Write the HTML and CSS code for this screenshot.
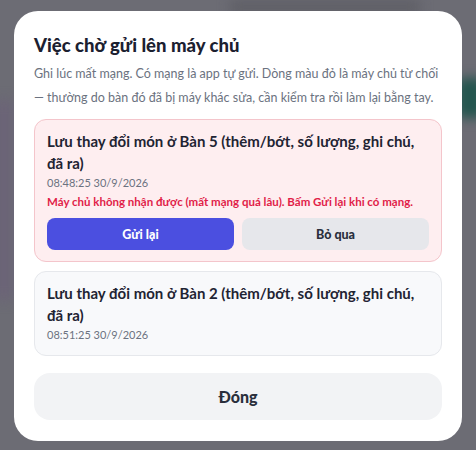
FILE: index.html
```html
<!DOCTYPE html>
<html lang="vi">
<head>
    <meta charset="UTF-8">
    <meta name="viewport" content="width=device-width, initial-scale=1.0">
    <title>Việc chờ gửi</title>
    <link rel="stylesheet" href="styles.css">
</head>
<body>
    <!-- Nền trang phía sau (bị làm mờ) -->
    <div class="backdrop">
        <div class="blob blob-top"></div>
        <div class="blob blob-teal"></div>
        <div class="blob blob-left"></div>
    </div>

    <div class="overlay">
        <div class="modal">
            <h2 class="modal-title">Việc chờ gửi lên máy chủ</h2>
            <p class="modal-desc">Ghi lúc mất mạng. Có mạng là app tự gửi. Dòng màu đỏ là máy chủ từ chối — thường do bàn đó đã bị máy khác sửa, cần kiểm tra rồi làm lại bằng tay.</p>

            <div class="job-list">
                <div class="job job-failed">
                    <div class="job-title">Lưu thay đổi món ở Bàn 5 (thêm/bớt, số lượng, ghi chú, đã ra)</div>
                    <div class="job-time">08:48:25 30/9/2026</div>
                    <div class="job-error">Máy chủ không nhận được (mất mạng quá lâu). Bấm Gửi lại khi có mạng.</div>
                    <div class="job-actions">
                        <button class="btn btn-primary">Gửi lại</button>
                        <button class="btn btn-muted">Bỏ qua</button>
                    </div>
                </div>
                <div class="job">
                    <div class="job-title">Lưu thay đổi món ở Bàn 2 (thêm/bớt, số lượng, ghi chú, đã ra)</div>
                    <div class="job-time">08:51:25 30/9/2026</div>
                </div>
            </div>

            <button class="btn-close">Đóng</button>
        </div>
    </div>
</body>
</html>
```

FILE: styles.css
```css
* {
    box-sizing: border-box;
}

body {
    margin: 0;
    height: 100vh;
    overflow: hidden;
    background: #6c6c74;
    font-family: Lato, "Noto Sans", sans-serif;
    color: #1f2433;
}

.backdrop {
    position: fixed;
    inset: 0;
    filter: blur(6px);
}

.blob {
    position: absolute;
}

.blob-top {
    top: 0;
    left: 230px;
    width: 190px;
    height: 14px;
    background: #5f5f66;
}

.blob-teal {
    top: 78px;
    right: -10px;
    width: 30px;
    height: 40px;
    background: #24564f;
    border-radius: 8px;
}

.blob-left {
    top: 100px;
    left: -6px;
    width: 20px;
    height: 200px;
    background: #6b6477;
}

.overlay {
    position: fixed;
    inset: 0;
    display: flex;
    justify-content: center;
    align-items: flex-start;
    padding-top: 11px;
}

.modal {
    width: 448px;
    background: #fff;
    border-radius: 24px;
    padding: 22px 20px 21px;
    display: flex;
    flex-direction: column;
}

.modal-title {
    margin: 0;
    font-size: 18.5px;
    font-weight: 900;
    line-height: 24px;
    color: #1b2030;
}

.modal-desc {
    margin: 5px 0 9px;
    font-size: 12.5px;
    line-height: 24px;
    color: #6b7280;
}

.job-list {
    display: flex;
    flex-direction: column;
    gap: 9px;
}

.job {
    background: #f8f9fb;
    border: 1px solid #e6e8ec;
    border-radius: 12px;
    padding: 10px 12px 11px;
}

.job-failed {
    background: #feeef0;
    border-color: #f4c5cb;
}

.job-title {
    font-size: 15px;
    font-weight: 700;
    line-height: 22px;
    color: #1f2433;
}

.job-time {
    font-size: 11px;
    line-height: 18px;
    color: #6b7280;
}

.job-error {
    margin-top: 1px;
    font-size: 11.5px;
    font-weight: 700;
    line-height: 18px;
    color: #e11d48;
}

.job-actions {
    display: grid;
    grid-template-columns: 1fr 1fr;
    gap: 8px;
    margin-top: 7px;
}

.btn {
    height: 32px;
    border: none;
    border-radius: 8px;
    font-family: inherit;
    font-size: 12.5px;
    font-weight: 900;
    cursor: pointer;
}

.btn-primary {
    background: #4b4fe0;
    color: #fff;
}

.btn-muted {
    background: #e6e7eb;
    color: #2a2f3c;
}

.btn-close {
    margin-top: 17px;
    height: 47px;
    border: none;
    border-radius: 16px;
    background: #f2f3f5;
    font-family: inherit;
    font-size: 16px;
    font-weight: 900;
    color: #2a2f3c;
    cursor: pointer;
}
```
